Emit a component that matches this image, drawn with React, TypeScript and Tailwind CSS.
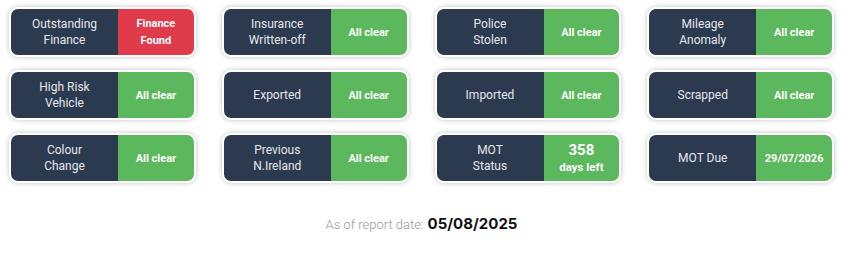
const CHECKS: { label: string[]; value: string[]; tone: 'ok' | 'bad'; big?: boolean }[] = [
  { label: ['Outstanding', 'Finance'], value: ['Finance', 'Found'], tone: 'bad' },
  { label: ['Insurance', 'Written-off'], value: ['All clear'], tone: 'ok' },
  { label: ['Police', 'Stolen'], value: ['All clear'], tone: 'ok' },
  { label: ['Mileage', 'Anomaly'], value: ['All clear'], tone: 'ok' },
  { label: ['High Risk', 'Vehicle'], value: ['All clear'], tone: 'ok' },
  { label: ['Exported'], value: ['All clear'], tone: 'ok' },
  { label: ['Imported'], value: ['All clear'], tone: 'ok' },
  { label: ['Scrapped'], value: ['All clear'], tone: 'ok' },
  { label: ['Colour', 'Change'], value: ['All clear'], tone: 'ok' },
  { label: ['Previous', 'N.Ireland'], value: ['All clear'], tone: 'ok' },
  { label: ['MOT', 'Status'], value: ['358', 'days left'], tone: 'ok', big: true },
  { label: ['MOT Due'], value: ['29/07/2026'], tone: 'ok' },
]

export default function App() {
  return (
    <div className="w-[850px] h-[253px] bg-white" style={{ fontFamily: 'Roboto, "Liberation Sans", sans-serif' }}>
      {/* Grid of checks */}
      <div className="grid grid-cols-4 gap-x-[26px] gap-y-[13px] pl-[9px] pr-[16px] pt-[7px]">
        {CHECKS.map((c, i) => (
          <div
            key={i}
            className="flex h-[50px] rounded-[9px] border-2 border-white overflow-hidden shadow-[0_0_5px_rgba(0,0,0,0.25)]"
          >
            <div className="w-[107px] shrink-0 bg-[#2c3a50] flex flex-col items-center justify-center text-[12px] leading-[16px] text-[#e4e7ec]">
              {c.label.map(l => (
                <span key={l}>{l}</span>
              ))}
            </div>
            <div
              className={`flex-1 flex flex-col items-center justify-center text-white font-bold ${
                c.tone === 'bad' ? 'bg-[#df3b4b]' : 'bg-[#5cb85c]'
              }`}
            >
              {c.big ? (
                <>
                  <span className="text-[15px] leading-[17px]">{c.value[0]}</span>
                  <span className="text-[11.5px] leading-[16px]">{c.value[1]}</span>
                </>
              ) : (
                c.value.map(v => (
                  <span key={v} className="text-[11px] leading-[17px]">{v}</span>
                ))
              )}
            </div>
          </div>
        ))}
      </div>

      {/* Report date */}
      <div className="flex items-baseline justify-center gap-[4px] mt-[30px] pr-[7px]">
        <span className="text-[13px] font-light text-[#9a9a9a]">As of report date:</span>
        <span className="text-[15px] font-bold text-[#111]" style={{ fontFamily: 'Inter, sans-serif' }}>05/08/2025</span>
      </div>
    </div>
  )
}
